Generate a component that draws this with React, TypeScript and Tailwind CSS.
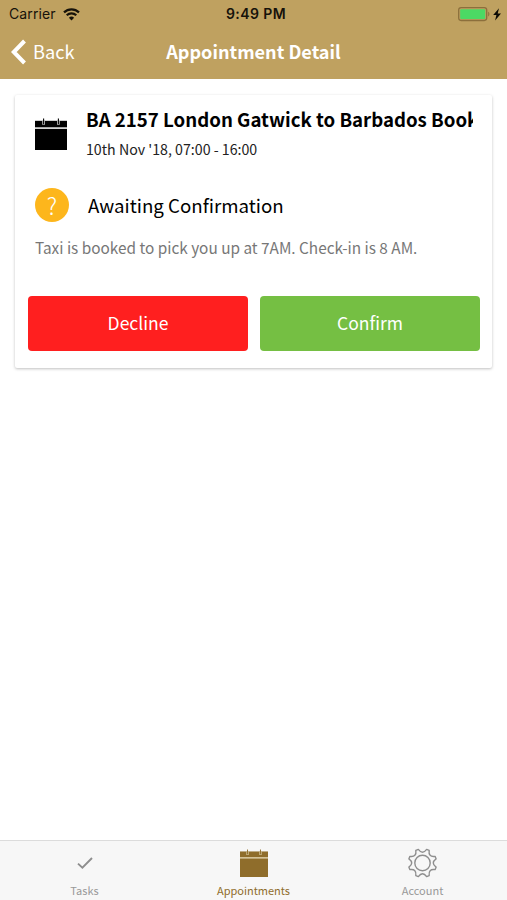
import { useState } from 'react'

type Tab = 'tasks' | 'appointments' | 'account'

const WifiIcon = () => (
  <svg width="17" height="13" viewBox="0 0 17 13" fill="none" stroke="#16120a">
    <path d="M1 4.4a10.8 10.8 0 0 1 15 0" strokeWidth="2.2" />
    <path d="M3.7 7.3a6.9 6.9 0 0 1 9.6 0" strokeWidth="2.1" />
    <path d="M8.5 12.4 5.9 9.7a3.8 3.8 0 0 1 5.2 0Z" fill="#16120a" stroke="none" />
  </svg>
)

const BatteryIcon = () => (
  <svg width="43" height="15" viewBox="0 0 43 15">
    <rect x="0.7" y="0.7" width="28" height="12.8" rx="2.4" fill="none" stroke="#8c6f3c" strokeWidth="1.3" />
    <rect x="2.2" y="2.2" width="25" height="9.8" rx="1" fill="#4cd964" />
    <path d="M30.2 4.8v4.6c1.6-.6 1.6-4 0-4.6Z" fill="#8c6f3c" />
    <path d="M41 1.2 35.2 8h3.2l-1.3 5.4L43 6.4h-3.3Z" fill="#0c0a05" />
  </svg>
)

const CalendarIcon = ({ size, line }: { size: number; line: string }) => (
  <svg width={size} height={size} viewBox="0 0 32 32">
    <path d="M0 2.8h32V32H0Z" fill="currentColor" />
    <path d="M0 10.1h32" stroke={line} strokeWidth="1.8" />
    <path d="M8.6 2.8v4M23.4 2.8v4" stroke={line} strokeWidth="2.6" />
    <path d="M8.6 .6v5.6M23.4 .6v5.6" stroke="currentColor" strokeWidth="1.1" />
  </svg>
)

// Eight flat teeth with scooped valleys between them
const point = (r: number, deg: number) => {
  const a = (deg * Math.PI) / 180
  return `${(14.5 + r * Math.sin(a)).toFixed(2)} ${(15 - r * Math.cos(a)).toFixed(2)}`
}

const gearPath =
  Array.from({ length: 8 }, (_, i) => {
    const c = i * 45
    return `${i === 0 ? 'M' : 'L'}${point(14.2, c - 17)}Q${point(8, c)} ${point(14.2, c + 17)}`
  }).join('') + 'Z'

const GearIcon = () => (
  <svg width="30" height="30" viewBox="0 0 30 30" fill="none" stroke="currentColor" strokeWidth="1.4" strokeLinejoin="round">
    <path d={gearPath} />
    <circle cx="14.5" cy="15" r="7.7" />
  </svg>
)

const CheckIcon = () => (
  <svg width="30" height="30" viewBox="0 0 30 30" fill="none" stroke="currentColor" strokeWidth="1.9">
    <path d="m8 15.6 4.4 4L22 10" />
  </svg>
)

const TabButton = ({
  label,
  active,
  onClick,
  children,
}: {
  label: string
  active: boolean
  onClick: () => void
  children: React.ReactNode
}) => (
  <button
    onClick={onClick}
    className={`flex flex-1 flex-col items-center pt-[7px] ${active ? 'text-[#8f6d2b]' : 'text-[#8e8e8e]'}`}
  >
    <span className="flex h-[30px] items-center justify-center">{children}</span>
    <span className={`mt-1 text-[11px] leading-4 ${active ? '' : 'text-[#999]'}`}>{label}</span>
  </button>
)

export default function App() {
  const [tab, setTab] = useState<Tab>('appointments')

  return (
    <div className="flex h-[900px] w-[507px] flex-col overflow-hidden bg-white font-['Noto_Sans_CJK_SC',sans-serif]">
      <header className="h-[79px] bg-[#bfa160]">
        {/* Status bar */}
        <div className="grid h-7 grid-cols-3 items-center pr-1.5 pl-[9px] font-[Inter,sans-serif] text-sm text-[#16120a]">
          <div className="flex items-center gap-[7px]">
            <span className="tracking-[0.1px]">Carrier</span>
            <WifiIcon />
          </div>
          <span className="pl-0.5 text-center font-semibold tracking-[0.4px]">9:49 PM</span>
          <div className="flex justify-end">
            <BatteryIcon />
          </div>
        </div>

        {/* Nav bar */}
        <div className="grid h-12 grid-cols-[1fr_auto_1fr] items-center px-[11px] text-white">
          <button className="flex items-center gap-[7px] text-[18.2px]">
            <svg width="15" height="26" viewBox="0 0 15 26" fill="none" stroke="currentColor" strokeWidth="4">
              <path d="M13.5 2 2.8 13l10.7 11" />
            </svg>
            Back
          </button>
          <h1 className="text-[18.1px] font-bold">Appointment Detail</h1>
        </div>
      </header>

      <main className="flex-1 px-[15px] pt-4">
        <section className="h-[273px] rounded-xs bg-white px-3 pt-[11px] shadow-[0_1px_3px_rgba(0,0,0,0.25)]">
          <div className="flex items-center gap-[19px] pr-[7px] pl-2">
            <div className="pt-[3px]">
              <CalendarIcon size={32} line="#d0d0d0" />
            </div>
            <div className="min-w-0 flex-1">
              <h2 className="overflow-hidden text-[18.65px] leading-[26px] font-bold whitespace-nowrap text-black">
                BA 2157 London Gatwick to Barbados Booking
              </h2>
              <p className="mt-[7px] text-[14.2px] leading-5 text-[#222]">10th Nov '18, 07:00 - 16:00</p>
            </div>
          </div>

          <div className="mt-[29px] flex items-center gap-[19px] pl-2">
            <span className="flex size-[34px] items-center justify-center rounded-full bg-[#fdb61c] text-[23px] font-light text-white">
              ?
            </span>
            <span className="text-[18.7px] text-black">Awaiting Confirmation</span>
          </div>

          <p className="mt-[13px] pl-2 text-[15.35px] leading-6 text-[#777]">
            Taxi is booked to pick you up at 7AM. Check-in is 8 AM.
          </p>

          <div className="mt-[37px] grid grid-cols-2 gap-3 pl-px">
            <button className="h-[55px] rounded bg-[#ff1f1f] text-[17.5px] text-white">Decline</button>
            <button className="h-[55px] rounded bg-[#75bf43] text-[17.5px] text-white">Confirm</button>
          </div>
        </section>
      </main>

      {/* Tab bar */}
      <nav className="flex h-[60px] border-t border-[#dcdcdc] bg-[#f7f7f7]">
        <TabButton label="Tasks" active={tab === 'tasks'} onClick={() => setTab('tasks')}>
          <CheckIcon />
        </TabButton>
        <TabButton label="Appointments" active={tab === 'appointments'} onClick={() => setTab('appointments')}>
          <CalendarIcon size={28} line="#d9c9a0" />
        </TabButton>
        <TabButton label="Account" active={tab === 'account'} onClick={() => setTab('account')}>
          <GearIcon />
        </TabButton>
      </nav>
    </div>
  )
}
